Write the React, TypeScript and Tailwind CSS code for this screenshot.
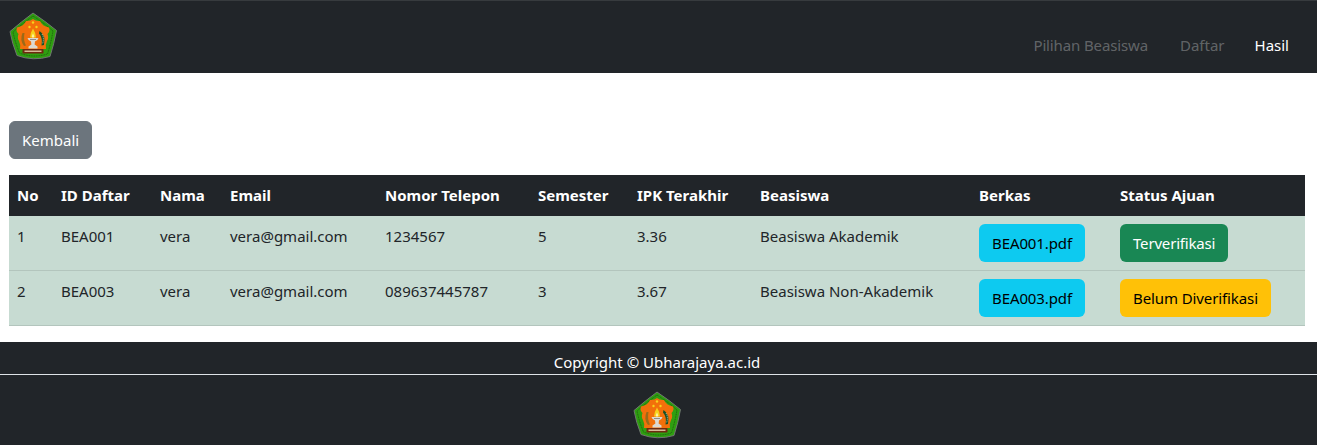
const headers = [
  ["No", "w-[44px]"],
  ["ID Daftar", "w-[99px]"],
  ["Nama", "w-[70px]"],
  ["Email", "w-[155px]"],
  ["Nomor Telepon", "w-[153px]"],
  ["Semester", "w-[99px]"],
  ["IPK Terakhir", "w-[123px]"],
  ["Beasiswa", "w-[219px]"],
  ["Berkas", "w-[141px]"],
  ["Status Ajuan", "w-[193px]"],
];

const rows = [
  { no: "1", id: "BEA001", nama: "vera", email: "vera@gmail.com", tel: "1234567", sem: "5", ipk: "3.36", bea: "Beasiswa Akademik", file: "BEA001.pdf", status: "Terverifikasi", ok: true },
  { no: "2", id: "BEA003", nama: "vera", email: "vera@gmail.com", tel: "089637445787", sem: "3", ipk: "3.67", bea: "Beasiswa Non-Akademik", file: "BEA003.pdf", status: "Belum Diverifikasi", ok: false },
];

function Logo() {
  return (
    <svg width="48" height="48" viewBox="0 0 48 48" className="block">
      <path d="M24 1 Q36 9 47.5 18.5 Q45 32 41 44.5 Q24 49.5 8 43.5 Q3 31 1 19.5 Q12 10 24 1 Z" fill="#2f9f10" stroke="#6f756f" strokeWidth="1" />
      <path d="M24 4 Q35 11 44 19 Q42 31 38.5 42 Q24 46.5 10.5 41 Q6 30 4 20 Q13 12 24 4 Z" fill="none" stroke="#1e5a12" strokeWidth="1" strokeDasharray="1 0.7" />
      <path d="M24 7 Q27 9.5 31 9 Q33 14 40 15.5 Q41.5 19 38.5 22 Q40 26 38 29 Q36 33 37 37 Q31 36.5 28 38 L20 38 Q16 36.5 11 37 Q12 33 10 29 Q8 26 9.5 22 Q6.5 19 8 15.5 Q15 14 17 9 Q21 9.5 24 7 Z" fill="#f2700b" />
      <path d="M24 16.5 Q27 21.5 27 25.5 L21 25.5 Q21 21.5 24 16.5 Z" fill="#f6d21c" />
      <path d="M24 21.5 Q25.2 23.5 25.2 25.5 L22.8 25.5 Q22.8 23.5 24 21.5 Z" fill="#fff3a6" />
      <path d="M18.5 26 H29.5 Q29 28.5 26 29.5 L25.6 32.5 L28.5 34.5 V36.5 H19.5 V34.5 L22.4 32.5 L22 29.5 Q19 28.5 18.5 26 Z" fill="#dcd9d2" />
      <path d="M21 27 H27 V28 H21 Z" fill="#8f8d88" />
      <path d="M13.5 21 Q10.5 28 15 34 L17 33.5 Q14 28 15.5 21 Z" fill="#9a6a18" />
      <path d="M30.5 19 Q37 23 35 33 L32.5 33.5 Q34 26 30 21.5 Z" fill="#174f25" />
      <path d="M33 22 Q35.5 26 33.5 32" fill="none" stroke="#e6e6d8" strokeWidth="0.8" strokeDasharray="1 1" />
      <circle cx="24" cy="10.5" r="1.2" fill="#f6d21c" />
      <circle cx="20.5" cy="15" r="1.2" fill="#f6d21c" />
      <circle cx="27.5" cy="15" r="1.2" fill="#f6d21c" />
      <rect x="13.5" y="37" width="21" height="4.5" rx="0.8" fill="#6e2a10" />
      <rect x="15.5" y="38.6" width="17" height="1.2" fill="#f1ddb8" />
    </svg>
  );
}

const td = "px-[8px] py-[8px]";
const btn = "block h-[38px] px-[13px] rounded-[6px]";

export default function App() {
  return (
    <div className="font-['Noto_Sans',sans-serif] text-[15px] leading-[24px] text-[#212529] bg-white min-h-[445px]">
      <nav className="h-[73px] bg-[#212529] border-t border-[#373b3e] flex items-start justify-between pl-[9px] pr-[12px]">
        <div className="pt-[11px]">
          <Logo />
        </div>
        <ul className="flex pt-[32px]">
          <li className="px-[16px] text-[#ffffff4d] tracking-[-0.13px]">Pilihan Beasiswa</li>
          <li className="pl-[16px] pr-[14px] text-[#ffffff4d]">Daftar</li>
          <li className="px-[16px] text-white">Hasil</li>
        </ul>
      </nav>

      <main className="px-[9px] pt-[48px] pb-[16px]">
        <button className="block h-[38px] px-[12px] rounded-[6px] bg-[#6c757d] text-white border border-[#6c757d]">Kembali</button>
        <table className="mt-[16px] w-[1296px] table-fixed border-collapse">
          <thead>
            <tr className="h-[41px] bg-[#212529] text-white text-left align-top">
              {headers.map(([label, w]) => (
                <th key={label} className={`${w} px-[8px] py-[8px] font-bold`}>{label}</th>
              ))}
            </tr>
          </thead>
          <tbody>
            {rows.map((r) => (
              <tr key={r.id} className="bg-[#c7dbd2] border-b border-[#b3c5bd] align-top">
                <td className={td}>{r.no}</td>
                <td className={td}>{r.id}</td>
                <td className={td}>{r.nama}</td>
                <td className={td}>{r.email}</td>
                <td className={td}>{r.tel}</td>
                <td className={td}>{r.sem}</td>
                <td className={td}>{r.ipk}</td>
                <td className={td}>{r.bea}</td>
                <td className={td}>
                  <button className={`${btn} bg-[#0dcaf0] text-black tracking-[-0.1px]`}>{r.file}</button>
                </td>
                <td className={td}>
                  {r.ok ? (
                    <button className={`${btn} bg-[#198754] text-white tracking-[-0.18px]`}>{r.status}</button>
                  ) : (
                    <button className={`${btn} bg-[#ffc107] text-black tracking-[-0.1px]`}>{r.status}</button>
                  )}
                </td>
              </tr>
            ))}
          </tbody>
        </table>
      </main>

      <footer className="h-[103px] bg-[#212529] text-white text-center pr-[3px]">
        <div className="h-[33px] -mr-[3px] pr-[3px] pt-[8px] border-b border-[#dee2e6]">Copyright © Ubharajaya.ac.id</div>
        <div className="flex justify-center pt-[16px]">
          <Logo />
        </div>
      </footer>
    </div>
  );
}
